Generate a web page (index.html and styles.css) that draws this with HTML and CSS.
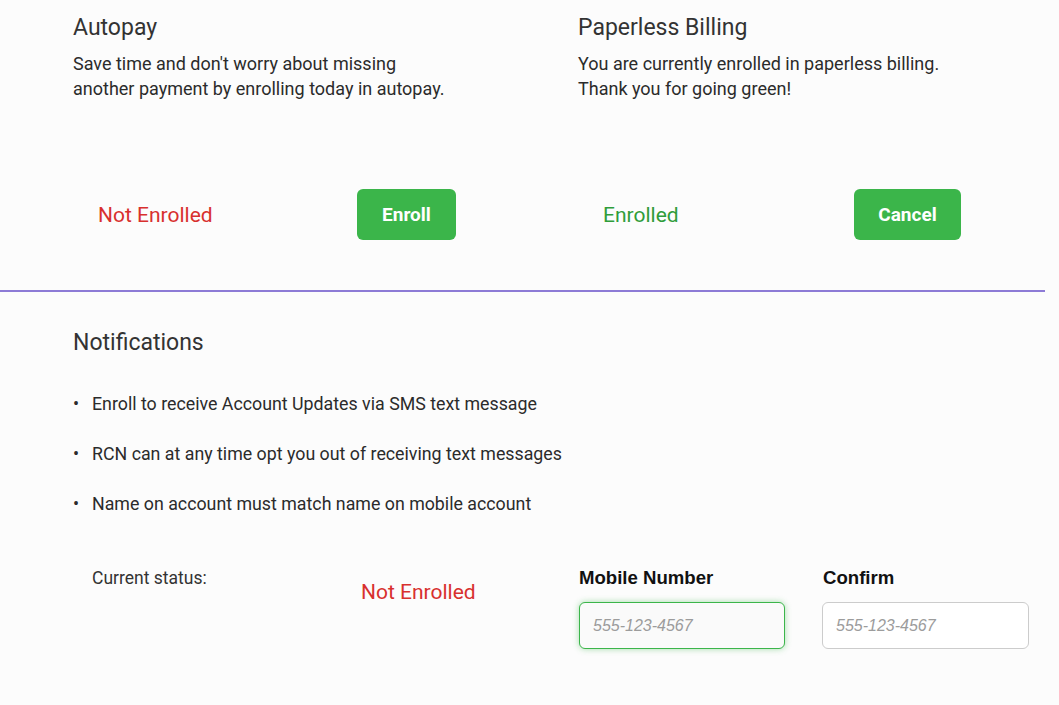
FILE: index.html
```html
<!DOCTYPE html>
<html lang="en">
<head>
<meta charset="utf-8">
<title>Account Settings</title>
<link rel="stylesheet" href="styles.css">
</head>
<body>
<div class="page">
  <div class="billing">
    <section class="card">
      <h2 class="card-title">Autopay</h2>
      <p class="card-text">Save time and don't worry about missing<br>another payment by enrolling today in autopay.</p>
      <div class="status-row">
        <span class="status status-off status-left">Not Enrolled</span>
        <button class="btn btn-enroll" type="button">Enroll</button>
      </div>
    </section>
    <section class="card">
      <h2 class="card-title">Paperless Billing</h2>
      <p class="card-text">You are currently enrolled in paperless billing.<br>Thank you for going green!</p>
      <div class="status-row">
        <span class="status status-on status-right">Enrolled</span>
        <button class="btn btn-cancel" type="button">Cancel</button>
      </div>
    </section>
  </div>
  <hr class="divider">
  <section class="notifications">
    <h2 class="card-title">Notifications</h2>
    <ul class="notes">
      <li class="note"><span class="dot">•</span>Enroll to receive Account Updates via SMS text message</li>
      <li class="note"><span class="dot">•</span>RCN can at any time opt you out of receiving text messages</li>
      <li class="note"><span class="dot">•</span>Name on account must match name on mobile account</li>
    </ul>
    <div class="sms-form">
      <div class="current-label">Current status:</div>
      <div class="current-value status-off">Not Enrolled</div>
      <div class="field">
        <label class="field-label" for="mobile">Mobile Number</label>
        <input class="field-input field-active" id="mobile" type="text" placeholder="555-123-4567" autofocus>
      </div>
      <div class="field">
        <label class="field-label" for="confirm">Confirm</label>
        <input class="field-input field-confirm" id="confirm" type="text" placeholder="555-123-4567">
      </div>
    </div>
  </section>
</div>
</body>
</html>
```

FILE: styles.css
```css
* { box-sizing: border-box; }

html, body {
  margin: 0;
  padding: 0;
  background: #fcfcfc;
}

body {
  font-family: Roboto, "Liberation Sans", Arial, sans-serif;
  color: #333333;
}

.page {
  width: 1059px;
  height: 705px;
  overflow: hidden;
}

.billing {
  display: grid;
  grid-template-columns: 505px 1fr;
  padding: 13px 0 0 73px;
}

.card-title {
  margin: 0;
  font-size: 23px;
  line-height: 30px;
  font-weight: 400;
  color: #333333;
}

.card-text {
  margin: 8px 0 0;
  font-size: 18px;
  line-height: 25px;
  color: #2b2b2b;
}

.status-row {
  display: flex;
  align-items: center;
  margin-top: 88px;
  padding-left: 25px;
}

.status {
  font-size: 21px;
  line-height: 24px;
}

.status-left { width: 259px; }
.status-right { width: 251px; }

.status-off { color: #d8302e; }
.status-on { color: #2f9d3a; }

.btn {
  height: 51px;
  border: none;
  border-radius: 6px;
  background: #3bb54a;
  color: #ffffff;
  font-family: Roboto, "Liberation Sans", Arial, sans-serif;
  font-weight: 700;
  font-size: 19px;
  padding: 0;
  cursor: pointer;
}

.btn-enroll { width: 99px; }
.btn-cancel { width: 107px; }

.divider {
  margin: 50px 0 0;
  width: 1045px;
  height: 2px;
  border: none;
  background: #8d7bd6;
}

.notifications {
  padding: 36px 0 0 73px;
}

.notes {
  list-style: none;
  margin: 33px 0 0;
  padding: 0;
}

.note {
  display: flex;
  font-size: 17.8px;
  line-height: 25px;
  color: #2b2b2b;
  margin-bottom: 25px;
}

.note:last-child { margin-bottom: 0; }

.dot {
  width: 19px;
  font-size: 18px;
}

.sms-form {
  display: grid;
  grid-template-columns: 269px 218px 244px 1fr;
  margin-top: 51px;
  padding-left: 19px;
}

.current-label {
  font-size: 17.5px;
  line-height: 22px;
  color: #333333;
}

.current-value {
  font-size: 21px;
  line-height: 24px;
  margin-top: 13px;
}

.field {
  display: flex;
  flex-direction: column;
}

.field-label {
  font-family: "Liberation Sans", Arial, sans-serif;
  font-weight: 700;
  font-size: 18.6px;
  line-height: 22px;
  color: #111111;
}

.field-input {
  margin-top: 13px;
  height: 47px;
  border-radius: 6px;
  background: #fafafa;
  border: 1px solid #cccccc;
  padding: 0 13px;
  font-family: "Liberation Sans", Arial, sans-serif;
  font-size: 16px;
  color: #333333;
  outline: none;
}

.field-input::placeholder {
  font-style: italic;
  color: #9c9c9c;
}

.field-active {
  width: 206px;
  border-color: #3bb54a;
  box-shadow: 0 0 6px rgba(59, 181, 74, 0.45);
}

.field-confirm {
  width: 207px;
  margin-left: -1px;
  background: #ffffff;
}
```
